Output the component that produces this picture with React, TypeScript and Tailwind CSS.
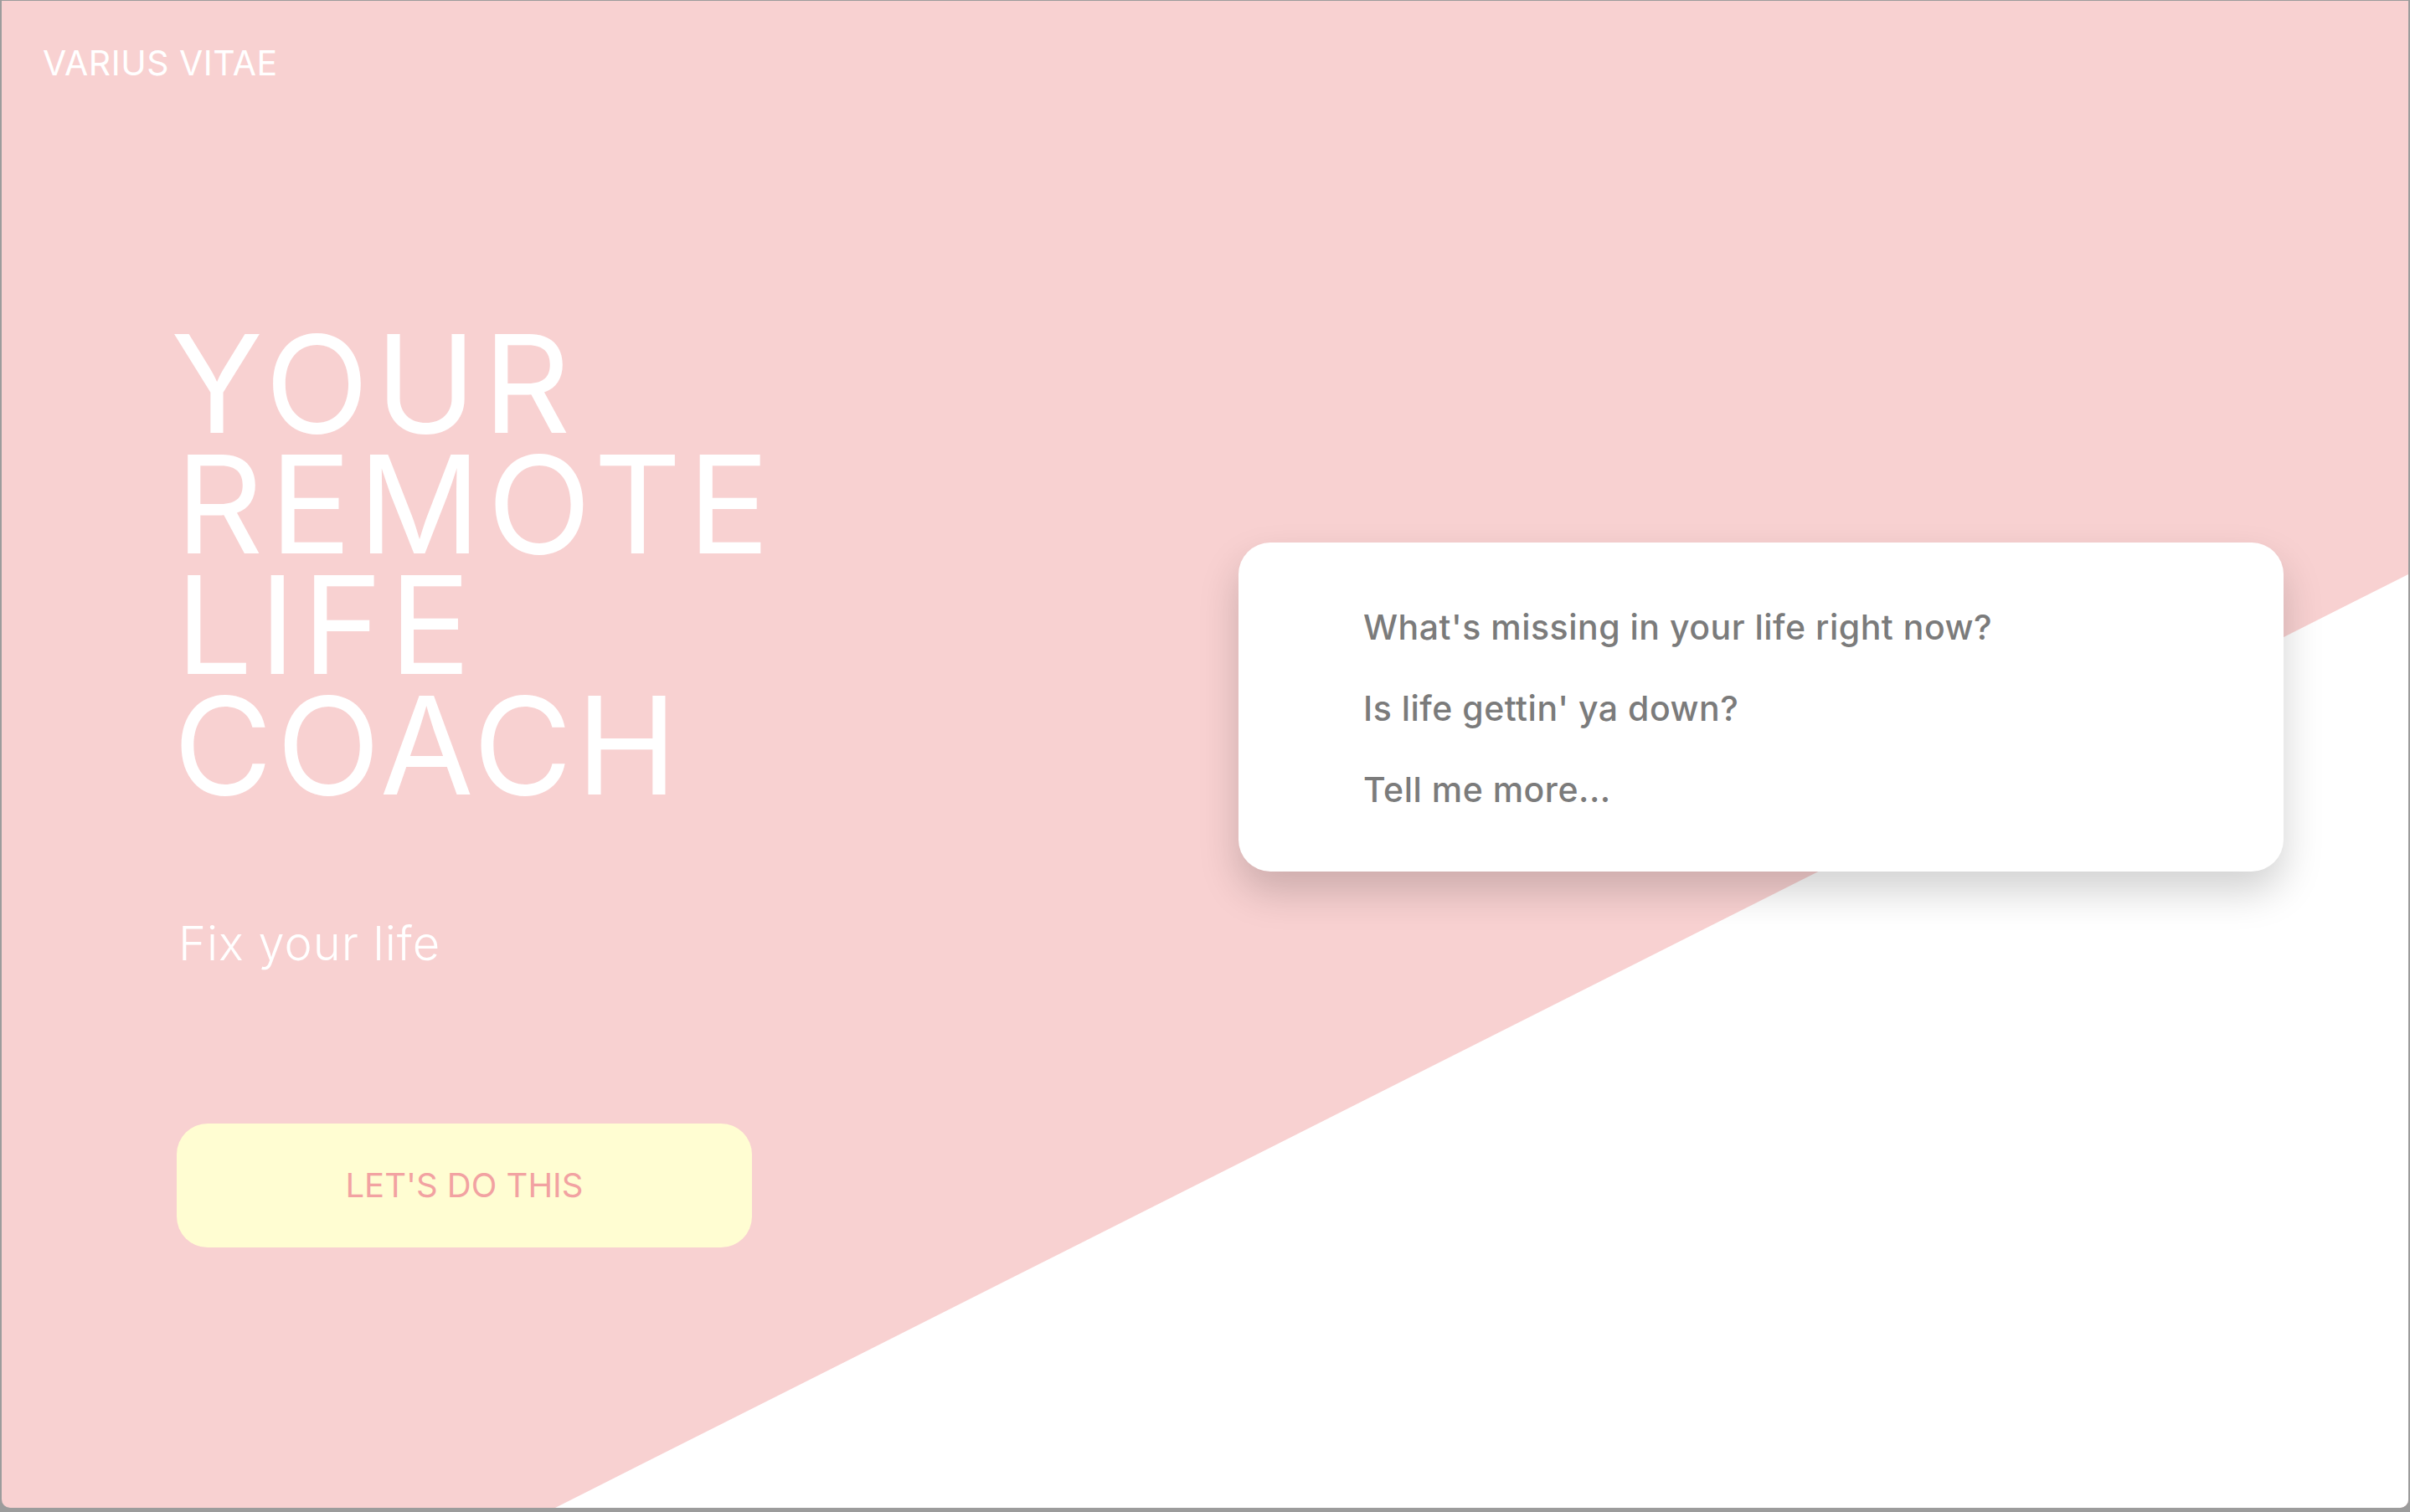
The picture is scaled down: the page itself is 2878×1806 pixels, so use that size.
import React from "react";

const font = { fontFamily: "Inter, 'Noto Sans', sans-serif" };

export default function App() {
  return (
    <div className="w-full h-[1806px] bg-[#9c9c9c] pt-[1px] px-[2px] pb-[5px]" style={font}>
      <div className="relative w-full h-full bg-[#f8d1d1] rounded-b-[10px] overflow-hidden">
        <div className="absolute inset-0 bg-white [clip-path:polygon(661px_100%,100%_685px,100%_100%)]" />
        <div className="relative">
          <header className="pt-[54px] pl-[49px]">
            <div className="text-white text-[41px] leading-[41px] tracking-[0.5px]">VARIUS VITAE</div>
          </header>
          <main className="flex justify-between items-start">
            <section className="pl-[202px] flex flex-col items-start">
              <h1 className="mt-[290px] text-white text-[162px] leading-[144px] font-normal tracking-[8px]">
                <div>YOUR</div>
                <div className="ml-[6px]">REMOTE</div>
                <div className="ml-[6px]">LIFE</div>
                <div className="ml-[3px] tracking-[5px]">COACH</div>
              </h1>
              <p className="mt-[137px] ml-[9px] text-white text-[56px] leading-[56px] font-light tracking-[1px]">Fix your life</p>
              <button className="mt-[187px] ml-[7px] w-[687px] h-[148px] rounded-[37px] bg-[#fffdd2] text-[#f2a2a2] text-[40px] leading-none">
                LET'S DO THIS
              </button>
            </section>
            <section className="pr-[149px]">
              <div className="mt-[552px] w-[1248px] h-[393px] bg-white rounded-[38px] shadow-[0_24px_48px_rgba(0,0,0,0.18)] pt-[53px] pl-[149px] text-[#7b7b7b] text-[41px] leading-[97px] font-medium tracking-[0.5px]">
                <div>What's missing in your life right now?</div>
                <div>Is life gettin' ya down?</div>
                <div>Tell me more...</div>
              </div>
            </section>
          </main>
        </div>
      </div>
    </div>
  );
}
